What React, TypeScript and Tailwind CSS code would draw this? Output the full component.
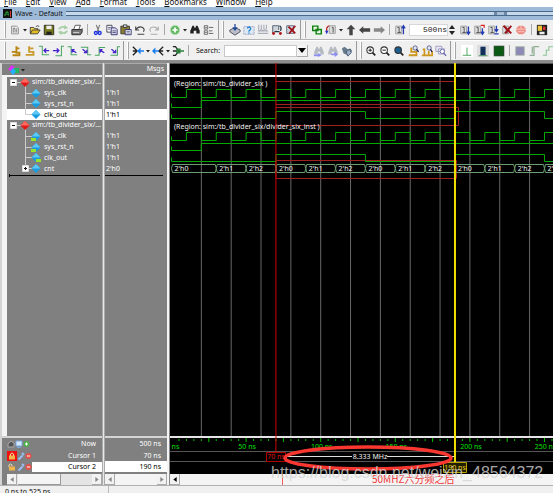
import React from 'react';

const NS = 1.492;
const END = 525;
const tx = (t: number) => 1.5 + t * NS;

const MENU = ['File', 'Edit', 'View', 'Add', 'Format', 'Tools', 'Bookmarks', 'Window', 'Help'];

/* ---------- icons ---------- */

const doc = (
    <>
        <path d="M3 2.5h6l2 2v7H3z" fill="#eee" stroke="#888" />
        <path d="M5 5v5M7 5v5M5 5h2M9 5v5" stroke="#777" />
    </>
);

const run = (extra: React.ReactNode) => (
    <>
        <path d="M2 2.5h7v9H2z" fill="#ddd" stroke="#999" />
        <path d="M4 4h2v6M4 10h4" stroke="#444" fill="none" />
        {extra}
    </>
);

const edge = (d: string, arrow: string) => (
    <>
        <path d={d} stroke="#4aa564" strokeWidth="1.2" fill="none" />
        <path d={arrow} stroke="#4422cc" strokeWidth="1.5" fill="none" />
    </>
);

const lens = (fill: string, extra?: React.ReactNode) => (
    <>
        <path d="M8.5 8.5l3.5 3.5" stroke="#222" strokeWidth="2" />
        <circle cx="6" cy="6" r="3.8" fill={fill} stroke="#333" strokeWidth="1.2" />
        {extra}
    </>
);

const binoculars = (color: string) => (
    <path d="M4 2h2v2h2V2h2l2.500 6v3h-4V8H5.500v3h-4V8z" fill={color} />
);

const ICONS: Record<string, React.ReactNode> = {
    New: doc,
    Open: <><path d="M1.500 11V4h4l1 1.500h4V7" fill="#f2d44a" stroke="#333" /><path d="M1.500 11.500L4 7h9l-3 4.500z" fill="#e5bc22" stroke="#333" /><path d="M8 3q2-2 4 0" stroke="#333" fill="none" /></>,
    Save: <><path d="M1.500 1.500h11v11h-11z" fill="#77781a" stroke="#222" /><path d="M4 2h6v4H4z" fill="#eee" /><path d="M4 9h6v3.500H4z" fill="#222" /></>,
    Reload: <><path d="M2 6q3-4 8-2M12 8q-3 4-8 2" stroke="#a8cfa8" strokeWidth="2.200" fill="none" /><path d="M9 1l4 4-5 1zM5 13L1 9l5-1z" fill="#a8cfa8" /></>,
    Print: <><path d="M5 1.500h6l-2 5H3z" fill="#fff" stroke="#444" /><path d="M1 6.500h11l1-1v4l-2 3H1z" fill="#777" stroke="#222" /><path d="M2.500 10h7" stroke="#ddd" /></>,
    Cut: <><path d="M5 1l3 8M9 1L6 9" stroke="#777" strokeWidth="1.300" /><circle cx="4.500" cy="10.500" r="1.700" fill="none" stroke="#1a35e0" strokeWidth="1.600" /><circle cx="9" cy="10.500" r="1.700" fill="none" stroke="#1a35e0" strokeWidth="1.600" /></>,
    Copy: <><path d="M1 1.500h6v8H1z" fill="#fff" stroke="#334" /><path d="M6 4.500h5l2 2v6H6z" fill="#dde" stroke="#226" /><path d="M2.500 4h3M2.500 6h2M7.500 8h4M7.500 10h4" stroke="#447" /></>,
    Paste: <><path d="M1 2.500h10v9H1z" fill="#8a7c32" stroke="#333" /><path d="M4 1h4v3H4z" fill="#ddd" stroke="#333" /><path d="M6 6.500h7v6H6z" fill="#fff" stroke="#226" /><path d="M7.500 8.500h4M7.500 10.500h4" stroke="#447" /></>,
    Undo: <path d="M2 3v4h4M2 7q3-5 8-3 3 2 1 5M4 12h8" stroke="#444" strokeWidth="1.300" fill="none" />,
    Redo: <path d="M12 3v4H8M12 7q-3-5-8-3-3 2-1 5M3 12h8" stroke="#aaa" strokeWidth="1.200" fill="none" />,
    'Add wave': <><circle cx="7" cy="7" r="5.500" fill="#62b862" stroke="#bde0bd" /><path d="M7 4v6M4 7h6" stroke="#fff" strokeWidth="2" /></>,
    Find: binoculars('#222'),
    Collapse: <><path d="M1.500 2h4v4h-4zM1.500 8h4v4h-4z" fill="#fff" stroke="#555" /><path d="M2.500 4h2M2.500 10h2M7 4h5M7 8h4M7 11h5" stroke="#555" /></>,
    Compile: <><path d="M1 7l6-3 6 3v2l-6 4-6-4z" fill="#b9bec8" stroke="#445" /><path d="M7 0v6M4.500 4L7 7l2.500-3" stroke="#224a9c" strokeWidth="1.500" fill="none" /></>,
    'Compile out of date': <><path d="M1 3h12v9H1z" fill="#dbe9f5" stroke="#99b" strokeDasharray="2 1" /><path d="M5 5q2-3 4 0 0 2-2 3v1M7 10v1.500" stroke="#1d7fd0" strokeWidth="1.500" fill="none" /></>,
    'Compile all': <><path d="M2 1v5M5 1v5M8 1v5M11 1v5M1 8h12M1 11h12" stroke="#aaaebb" strokeWidth="1.300" /><path d="M1 6l2 2 2-2 2 2 2-2 2 2" stroke="#99a" fill="none" /></>,
    Simulate: <><path d="M2 11V2h7v5" fill="#d0d4dc" stroke="#456" /><path d="M10 2q3 2 1 6M4 9h6" stroke="#234" strokeWidth="1.500" fill="none" /><circle cx="3" cy="11" r="1.700" fill="#b01820" /><circle cx="11" cy="11" r="1.700" fill="#b01820" /></>,
    'End simulation': <><path d="M2 2h8v9H2z" fill="#cdd5dd" stroke="#567" /><path d="M4 3l8 8M12 2L5 11" stroke="#a01018" strokeWidth="2" /></>,
    Environment: <><path d="M0 0h14v14H0z" fill="#e8f5e8" /><path d="M2 2.500h6v5H2zM6 6.500h6v5H6z" fill="none" stroke="#148014" strokeWidth="1.700" /></>,
    Restart: <><path d="M5 2h7v9H5z" fill="#ddd" stroke="#999" /><path d="M8 4h1.500v6M4 3Q1 4 2 9" stroke="#444" fill="none" /><path d="M5 2Q1 3 2 8" stroke="#c22" fill="none" strokeWidth="1.300" /><path d="M0 8h4l-2 4z" fill="#23c" /></>,
    Up: <path d="M7 1l5 5H9v7H5V6H2z" fill="#444" />,
    Back: <path d="M0 7l5-4.500V5h8v4H5v2.500z" fill="#444" />,
    Forward: <path d="M14 7L9 2.500V5H1v4h8v2.500z" fill="#888" />,
    'Run length': run(<path d="M11 12V3M9 5l2-3 2 3" stroke="#233ab0" strokeWidth="1.500" fill="none" />),
    Run: run(<path d="M11 3v9M9 9l2 3 2-3" stroke="#233ab0" strokeWidth="1.500" fill="none" />),
    'Continue run': run(<><path d="M11 5v7M9 9l2 3 2-3" stroke="#233ab0" strokeWidth="1.500" fill="none" /><path d="M9 1.500h4v3" stroke="#d22" strokeWidth="1.500" fill="none" /></>),
    'Run all': run(<path d="M11 2v7M9 6l2 3 2-3M8.500 11.500h5" stroke="#233ab0" strokeWidth="1.500" fill="none" />),
    Break: run(<path d="M3 2l9 9M12 2L5 11" stroke="#a01018" strokeWidth="2.200" />),
    Stop: <><path d="M4.500 2h5l3 3v4l-3 3h-5l-3-3V5z" fill="#ec8a80" /><path d="M1 6h12M3 9h8M7 2v4" stroke="#fbd0ca" /></>,
    Profile: <><path d="M1 1h12v12H1z" fill="#222" /><path d="M2 2h5v6H2z" fill="#eac23a" /><path d="M8 3h3v4H8z" fill="#d33" /><path d="M4 9h6v3H4z" fill="#eee" /></>,
    'Insert cursor': <path d="M3 12h8V9H7.500V1.500M7 4h4M2 8h5" stroke="#b98512" strokeWidth="2.200" fill="none" />,
    'Delete cursor': <path d="M2 11.500h9V8H6V1.500M6 4h5" stroke="#c79b2c" strokeWidth="2.200" fill="none" />,
    'Previous transition': edge('M1 1.500h4v10h8', 'M13 6.500H7M9.500 4L7 6.500 9.500 9'),
    'Next transition': edge('M4 12.500h7v-11h3', 'M1 6.500h7M5.500 4L8 6.500 5.500 9'),
    'Previous falling': edge('M2 2h4v9.500h7', 'M12 9L7 6M10 5.500H7V9'),
    'Next falling': edge('M1 2.500h8v9h4', 'M3 5l5 4M8 5.500V9H4.500'),
    'Previous rising': edge('M1 12h5V3h7', 'M12 9L7 6M10 5.500H7V9'),
    'Next rising': edge('M3 12h8V2h3', 'M4 5l5 4M9 5.500V9H5.500'),
    'Show drivers': <><path d="M1 2l5 5-5 5M1 7h5" stroke="#222" strokeWidth="1.500" fill="none" /><path d="M6 7l4-4v3h4v2h-4v3z" fill="#1b7ef0" /></>,
    'Show readers': <><path d="M13 2L8 7l5 5M13 7H8" stroke="#222" strokeWidth="1.500" fill="none" /><path d="M0 7l4-4v3h4v2H4v3z" fill="#1b7ef0" /></>,
    Expand: <><path d="M1 2h3l4 5-4 5H1M1 7h6" stroke="#222" strokeWidth="1.500" fill="none" /><path d="M5 4h5v2h4v2h-4v2H5z" fill="#2c7f3c" /></>,
    'Search up': <>{binoculars('#b5b9c2')}<path d="M10 12l-4-3v2H1v2h5v1z" fill="#8a8cf0" /></>,
    'Search down': <>{binoculars('#b5b9c2')}<path d="M13 11L9 8v2H5v2h4v2z" fill="#8a8cf0" /></>,
    'Search options': <><path d="M1 4l3-2 4 3 3-1 2 3-5 5-5-2z" fill="#667a8c" /><path d="M6 8l4-3 2 4-4 4z" fill="#9fb4cc" stroke="#456" /></>,
    'Zoom in': lens('#fff', <path d="M4 6h4M6 4v4" stroke="#222" strokeWidth="1.200" />),
    'Zoom out': lens('#fff', <path d="M4 6h4" stroke="#222" strokeWidth="1.200" />),
    'Zoom full': lens('#1d5d8c'),
    'Zoom cursor': <><path d="M2 12h9V8H5V3" stroke="#cc961c" strokeWidth="2.200" fill="none" /><circle cx="9.500" cy="3.500" r="2.500" fill="#dfe8fa" stroke="#557" /><path d="M11 5l2.500 3" stroke="#225" strokeWidth="1.500" /></>,
    'Zoom cursors': <><path d="M1 12h12V7M4 12V5H2M9 12V7" stroke="#cc961c" strokeWidth="2" fill="none" /><circle cx="9.500" cy="3.500" r="2.500" fill="#dfe8fa" stroke="#557" /><path d="M11 5l2 3" stroke="#225" strokeWidth="1.500" /></>,
    'Zoom range': <><path d="M1 1.500h7v6H1zM4 4.500h7v6H4z" fill="#e8e8f6" stroke="#99b" /><circle cx="8.500" cy="7.500" r="2.500" fill="#fff" stroke="#66a" /><path d="M10 9.500l3 3" stroke="#66a" strokeWidth="1.500" /></>,
    'Leaf view': <><path d="M0 0h14v14H0z" fill="#fff" /><path d="M7 3v9M2 12h10" stroke="#3a9c4c" fill="none" /></>,
    'Bar view': <><path d="M0 0h14v14H0z" fill="#ddd" /><path d="M4 2h6v10H4z" fill="#12305c" /><path d="M2 12.500h10" stroke="#3a8c4c" /></>,
    'Block view': <><path d="M0 0h14v14H0z" fill="#ddd" /><path d="M1.500 1.500h11v11h-11z" fill="#0b5a14" stroke="#0a3c10" /></>,
    'Event mode': <path d="M2 2h10v10H2z" fill="#8e88b4" stroke="#a9b8a9" />,
    'Edge mode': <path d="M2 12h5V2h6M5 2v8" stroke="#8fae95" strokeWidth="1.500" fill="none" />,
    'Pulse mode': <path d="M1 12h4V6h3V2h6" stroke="#86c490" strokeWidth="1.200" fill="none" />,
};

const Tool: React.FC<{ name: string }> = ({ name }) => (
    <button type="button" aria-label={name} className="flex h-[14px] w-[14px] shrink-0 items-center justify-center">
        <svg viewBox="0 0 14 14" className="size-3">{ICONS[name]}</svg>
    </button>
);

const Tools: React.FC<{ names: string[] }> = ({ names }) => (
    <>{names.map((name) => <Tool key={name} name={name} />)}</>
);

const Caret = () => (
    <svg viewBox="0 0 6 4" className="h-1 w-[6px] shrink-0"><path d="M1 1h4L3 3.500z" fill="#222" /></svg>
);
const Sep = () => <span className="mx-[3px] h-[11px] w-px shrink-0 bg-[#a8a8a8]" />;
const Grip = () => <span className="h-[17px] w-[2px] shrink-0 border-l border-white bg-[#a6a6a6]" />;
const Split = () => (
    <span className="flex h-full shrink-0 items-center gap-[3px] px-[2px]">
        <span className="h-full w-px bg-[#9a9a9a]" />
        <Grip />
    </span>
);

/* ---------- toolbars ---------- */

const Toolbars = () => (
    <div className="border-b-3 border-[#8c8c8c] bg-[#f0f0f0]">
        <div className="flex h-5 items-center overflow-hidden border-b border-[#b4b4b4] pl-1">
            <Grip />
            <span className="w-[2px] shrink-0" />
            <Tools names={['New']} /><Caret />
            <Tools names={['Open', 'Save', 'Reload', 'Print']} /><Sep />
            <Tools names={['Cut', 'Copy', 'Paste', 'Undo', 'Redo']} /><Sep />
            <Tools names={['Add wave']} /><Caret />
            <Tools names={['Find', 'Collapse']} />
            <Split />
            <span className="w-[2px] shrink-0" />
            <Tools names={['Compile', 'Compile out of date', 'Compile all', 'Simulate', 'End simulation']} />
            <Split />
            <span className="w-[2px] shrink-0" />
            <Tools names={['Environment', 'Restart']} /><Caret />
            <Tools names={['Up', 'Back', 'Forward']} /><Sep />
            <Tools names={['Run length']} />
            <input
                aria-label="Run length value"
                defaultValue="500ns"
                className="ml-[2px] h-3 w-[39px] shrink-0 border border-[#d8d8d8] bg-white text-right font-['Liberation_Mono',monospace] text-[8px] text-[#222] outline-none"
            />
            <svg viewBox="0 0 8 12" className="mr-[2px] h-3 w-2 shrink-0"><path d="M1 5h6L4 1zM1 7h6l-3 4z" fill="#222" /></svg>
            <Tools names={['Run', 'Continue run', 'Run all', 'Break', 'Stop']} /><Sep />
            <Tools names={['Profile']} />
        </div>
        <div className="flex h-5 items-center overflow-hidden border-t border-white pl-1">
            <Grip />
            <span className="w-[3px] shrink-0" />
            <Tools names={['Insert cursor', 'Delete cursor', 'Previous transition', 'Next transition', 'Previous falling', 'Next falling', 'Previous rising', 'Next rising']} />
            <Split />
            <Tools names={['Show drivers']} /><Caret />
            <Tools names={['Show readers']} /><Caret />
            <Tools names={['Expand']} />
            <Sep />
            <label htmlFor="search" className="ml-1 w-7 shrink-0">Search:</label>
            <input id="search" className="h-3 w-[73px] shrink-0 border border-[#c8c8c8] bg-white px-px outline-none" />
            <button type="button" aria-label="Search history" className="mr-1 flex h-3 w-[11px] shrink-0 items-center justify-center border-r border-b border-[#aaa] bg-[#f4f4f4]">
                <svg viewBox="0 0 8 5" className="h-[5px] w-2"><path d="M0 0h8L4 5z" fill="#000" /></svg>
            </button>
            <Tools names={['Search up', 'Search down', 'Search options']} />
            <Split />
            <Tools names={['Zoom in', 'Zoom out', 'Zoom full', 'Zoom cursor', 'Zoom cursors', 'Zoom range']} />
            <Split />
            <span className="flex shrink-0 gap-[2px] pl-[2px]">
                <Tools names={['Leaf view', 'Bar view', 'Block view']} />
            </span>
            <Sep />
            <Tools names={['Event mode', 'Edge mode', 'Pulse mode']} />
        </div>
    </div>
);

/* ---------- signal tree ---------- */

type Signal = { name: string; value?: string; kind: 'region' | 'signal' | 'in' | 'out' | 'bus'; active?: boolean };

const SIGNALS: Signal[] = [
    { name: 'sim:/tb_divider_six/...', kind: 'region' },
    { name: 'sys_clk', value: "1'h1", kind: 'signal' },
    { name: 'sys_rst_n', value: "1'h1", kind: 'signal' },
    { name: 'clk_out', value: "1'h1", kind: 'signal', active: true },
    { name: 'sim:/tb_divider_six/...', kind: 'region' },
    { name: 'sys_clk', value: "1'h1", kind: 'in' },
    { name: 'sys_rst_n', value: "1'h1", kind: 'in' },
    { name: 'clk_out', value: "1'h1", kind: 'out' },
    { name: 'cnt', value: "2'h0", kind: 'bus' },
];

const Node: React.FC<{ signal: Signal; last: boolean }> = ({ signal, last }) => {
    const region = signal.kind === 'region';
    const x = region ? 18 : 29;
    return (
        <svg viewBox="0 0 36 11" className="h-[11px] shrink-0" style={{ width: region ? 24 : 36 }} preserveAspectRatio="xMinYMid slice">
            {region
                ? <path d="M10 5.500h4M18.500 8v3" stroke="#ccc" fill="none" />
                : <path d={last ? 'M18.500 0v5.500H25' : 'M18.500 0v11M18.500 5.500H25'} stroke="#ccc" fill="none" />}
            {(region || signal.kind === 'bus') && (
                <g transform={region ? 'translate(3 2)' : 'translate(15 2)'}>
                    <path d="M.5.5h6v6h-6z" fill="#fff" stroke="#ddd" />
                    <path d={region ? 'M2 3.500h3' : 'M2 3.500h3M3.500 2v3'} stroke="#111" />
                </g>
            )}
            <path d={`M${x} 1l4.500 4.500-4.500 4.500-4.500-4.500z`} fill={region ? '#e01818' : '#1a9be0'} />
            <path d={`M${x} 1l4.500 4.500h-9z`} fill={region ? '#ff6a60' : '#5cc8f4'} />
            {signal.kind === 'in' && <path d="M24 7h5v3h-5z" fill="#9be22c" />}
            {signal.kind === 'out' && <path d="M29 7h5v3h-5z" fill="#9be22c" />}
        </svg>
    );
};

/* ---------- waveforms ---------- */

type Step = [number, number];

const trace = (steps: Step[], low: number, high: number) => {
    const y = (v: number) => (v ? high : low);
    let d = `M1.500 ${low - 4}V${y(steps[0][1])}`;
    steps.slice(1).forEach(([t, v]) => {
        d += `H${tx(t)}V${y(v)}`;
    });
    return d + `H${tx(END)}`;
};

const CLOCK: Step[] = [[0, 0], ...Array.from({ length: 52 }, (_, i): Step => [10 + i * 10, i % 2 ? 0 : 1])];
const RESET: Step[] = [[0, 0], [20, 1]];
const OUT: Step[] = [[0, 0], ...Array.from({ length: 8 }, (_, i): Step => [70 + i * 60, i % 2 ? 0 : 1])];
const COUNTS = [0, ...Array.from({ length: 25 }, (_, i) => 30 + i * 20)];
const GRID = Array.from({ length: 26 }, (_, i) => 20 + i * 20);

const Waves = () => (
    <svg width={tx(END)} height="110" className="absolute top-0 left-0" fill="none">
        <g stroke="#a02020">
            <path d={`M${tx(70)} 4.500H${tx(190)}M${tx(70)} 27.500H${tx(190)}M${tx(70)} 30.500H288.500V48.500H${tx(70)}`} />
            <path d={`M${tx(70)} 83.500H286.500V101.500H${tx(70)}z`} />
        </g>
        <g stroke="#00a800">
            <path d={trace(CLOCK, 20.5, 12.5)} />
            <path d={trace(RESET, 30.5, 23.5)} />
            <path d={trace(OUT, 41.5, 34.5)} />
            <path d={trace(CLOCK, 63.5, 55.5)} />
            <path d={trace(RESET, 73.5, 66.5)} />
            <path d={trace(OUT, 84.5, 77.5)} />
        </g>
        <path
            stroke="#6c9c70"
            d={COUNTS.map((t, i) => {
                const a = tx(t);
                const b = tx(COUNTS[i + 1] ?? END);
                return `M${a} 91.500L${a + 1} 87.500H${b - 1}L${b} 91.500L${b - 1} 95.500H${a + 1}z`;
            }).join('')}
        />
        <g fill="#f0f0f0">
            <text x="4" y="9">(Region: sim:/tb_divider_six )</text>
            <text x="4" y="52">(Region: sim:/tb_divider_six/divider_six_inst )</text>
            {COUNTS.map((t, i) => <text key={t} x={tx(t) + 3} y="94">{`2'h${i % 3}`}</text>)}
        </g>
    </svg>
);

const Ruler = () => (
    <svg width={tx(END)} height="36" className="absolute top-0 left-0" fill="none">
        {Array.from({ length: 104 }, (_, i) => (i + 1) * 5).map((t) => (
            <path key={t} d={`M${tx(t)} ${t % 25 ? 1 : 0}V${t % 25 ? 3 : 4}`} stroke="#00c000" />
        ))}
        <g fill="#00e000" textAnchor="middle">
            {Array.from({ length: 11 }, (_, i) => i * 50).map((t) => (
                <text key={t} x={tx(t) + 1} y="11">{t} ns</text>
            ))}
        </g>
        <path d={`M0 13.500H${tx(END)}M0 23.500H${tx(END)}`} stroke="#555" />
        <path d={`M115 18.500H182M217 18.500H${tx(190)}`} stroke="#ddd" />
        <text x="200" y="21" fill="#f4f4f4" textAnchor="middle">8.333 MHz</text>
        <path d="M96.500 14.500h19v9h-19z" fill="#000" stroke="#b00000" />
        <text x="106" y="21" fill="#e01010" textAnchor="middle">70 ns</text>
        <path d="M273.500 24.500h23v10h-23z" fill="#221e00" stroke="#b8a400" />
        <text x="285" y="32" fill="#e8d020" textAnchor="middle">190 ns</text>
    </svg>
);

const Arrow: React.FC<{ dir: 'left' | 'right'; dark?: boolean }> = ({ dir, dark }) => (
    <button type="button" aria-label={`Scroll ${dir}`} className="flex h-[11px] w-[10px] shrink-0 items-center justify-center border-r border-b border-[#aaa] bg-[#f2f2f2]">
        <svg viewBox="0 0 4 6" className="h-[5px] w-1">
            <path d={dir === 'left' ? 'M4 0v6L0 3z' : 'M0 0v6l4-3z'} fill={dark ? '#000' : '#888'} />
        </svg>
    </button>
);

const CursorIcons: React.FC<{ locked?: boolean }> = ({ locked }) => (
    <svg viewBox="0 0 25 10" className="h-[10px] w-[25px] shrink-0">
        {locked && <path d="M0 0h10v10H0z" fill="#f01010" />}
        <path d={locked ? 'M3.500 5V3q1.500-2 3 0v2' : 'M2 5V3q1.500-2 3 0v1'} stroke="#f0e0b0" fill="none" />
        <path d="M2 4.500h6v4H2z" fill="#efb54a" />
        <path d="M11.500 8.500l4-4M15 2l2 2" stroke="#9cc0f4" strokeWidth="1.800" />
        <circle cx="21.500" cy="5" r="3" fill="#e25048" />
        <path d="M20 5h3" stroke="#fff" />
    </svg>
);

const NowIcons = () => (
    <svg viewBox="0 0 25 10" className="h-[10px] w-[25px] shrink-0">
        <path d="M1 8V5l3-3 3 2v4z" fill="#555" stroke="#aaa" />
        <path d="M9 2h6v5H9zM10 8.500h4" fill="#d4e8ff" stroke="#7aa8dc" />
        <circle cx="19.500" cy="5" r="3" fill="#4cb04c" />
        <path d="M18 5h3M19.500 3.500v3" stroke="#fff" />
    </svg>
);

/* ---------- window ---------- */

const App: React.FC = () => {
    return (
        <div className="flex h-screen flex-col overflow-hidden bg-[#f0f0f0] font-['Noto_Sans',sans-serif] text-[7px] leading-[10px] text-[#111]">
            <nav className="flex h-[7px] shrink-0 items-end gap-[9px] bg-white pl-1 text-[8px] leading-[10px]">
                {MENU.map((item) => (
                    <button key={item} type="button" className="first-letter:underline">{item}</button>
                ))}
            </nav>

            <header className="flex h-[13px] shrink-0 items-center gap-[3px] bg-[#9dbbd8] pl-[3px]">
                <svg viewBox="0 0 9 9" className="size-[9px] shrink-0">
                    <path d="M0 0h9v9H0z" fill="#111" />
                    <path d="M1 6h2V3h2v3h1" stroke="#2fae3c" fill="none" />
                    <path d="M7.500 2v6" stroke="#d33" />
                </svg>
                <h1 className="shrink-0">Wave - Default</h1>
                <div className="flex h-[5px] flex-1 justify-end border-y border-[#46688a] bg-[#c6d8e9] pr-[46px]">
                    <span className="w-[13px] border-x-3 border-dotted border-[#6c88a6] bg-[#a9c0d8]" />
                </div>
            </header>

            <Toolbars />

            <main className="flex min-h-0 flex-1 border-l-2 border-[#d4d4d4]">
                <section className="flex w-[100px] shrink-0 flex-col bg-[#808080] text-white">
                    <div className="flex h-3 shrink-0 items-center border-t border-[#aaa] pl-[6px]">
                        <svg viewBox="0 0 12 10" className="h-[10px] w-3">
                            <path d="M4 0l4 4-4 4-4-4z" fill="#e02cf0" />
                            <path d="M6 3h5v5H6z" fill="#20b860" />
                            <path d="M5 3l3 3.500L5 10 2 6.500z" fill="#22b0ff" />
                        </svg>
                        <Caret />
                    </div>
                    <div className="flex-1 border-t-2 border-l-[5px] border-[#f4f4f4]">
                        <ul className="grid h-[97px] grid-rows-9">
                            {SIGNALS.map((s, i) => (
                                <li key={i} className={`flex items-center gap-px overflow-hidden whitespace-nowrap ${s.active ? 'bg-white text-black' : ''}`}>
                                    <Node signal={s} last={!!s.active || s.kind === 'bus'} />
                                    {s.name}
                                </li>
                            ))}
                        </ul>
                        <div className="mx-[2px] h-[3px] border-l border-black"><div className="h-[2px] border-b border-black" /></div>
                    </div>
                    <div className="h-[36px] border-t-2 border-[#d4d4d4] pl-[5px]">
                        <div className="flex h-3 items-center"><NowIcons /><span className="flex-1 pr-[6px] text-right">Now</span></div>
                        <div className="flex h-[11px] items-center"><CursorIcons locked /><span className="flex-1 pr-[6px] text-right">Cursor 1</span></div>
                        <div className="flex h-[11px] items-center"><CursorIcons /><span className="flex-1 bg-white pr-[6px] text-right text-black">Cursor 2</span></div>
                    </div>
                    <div className="mt-[2px] flex h-[11px] bg-[#e4e4e4]">
                        <span className="w-[5px] bg-[#808080]" />
                        <Arrow dir="left" />
                        <span className="ml-px w-[43px] border-r border-b border-[#999] bg-[#f4f4f4]" />
                        <span className="flex-1" />
                        <Arrow dir="right" />
                    </div>
                </section>
                <div className="w-[3px] shrink-0 border-x border-[#aaa] bg-[#e8e8e8]" />

                <section className="flex w-[62px] shrink-0 flex-col bg-[#808080] text-white">
                    <div className="h-3 shrink-0 border-t border-[#aaa] pr-[3px] text-right">Msgs</div>
                    <div className="flex-1 border-t-2 border-[#f4f4f4]">
                        <ul className="grid h-[97px] grid-rows-9">
                            {SIGNALS.map((s, i) => (
                                <li key={i} className={`flex items-center pl-px ${s.active ? 'bg-white text-black' : ''}`}>{s.value}</li>
                            ))}
                        </ul>
                        <div className="mr-1 h-[2px] border-b border-black" />
                    </div>
                    <div className="h-[36px] border-t-2 border-[#d4d4d4] text-right">
                        <div className="flex h-3 items-center justify-end pr-[6px]">500 ns</div>
                        <div className="flex h-[11px] items-center justify-end pr-[6px]">70 ns</div>
                        <div className="flex h-[11px] items-center justify-end bg-white pr-[6px] text-black">190 ns</div>
                    </div>
                    <div className="mt-[2px] flex h-[11px] justify-between bg-[#f4f4f4]">
                        <Arrow dir="left" />
                        <Arrow dir="right" />
                    </div>
                </section>
                <div className="w-[3px] shrink-0 border-r border-[#888] bg-[#f4f4f4]" />

                <section className="relative flex min-w-0 flex-1 flex-col overflow-hidden bg-black">
                    <div className="h-3 shrink-0 border-t border-[#555]" />
                    <div className="relative flex-1 overflow-hidden border-t-2 border-[#f4f4f4]">
                        <svg width={tx(END)} height="100%" className="absolute top-0 left-0">
                            {GRID.map((t) => <line key={t} x1={tx(t)} x2={tx(t)} y1="0" y2="100%" stroke="#686868" />)}
                        </svg>
                        <Waves />
                    </div>
                    <div className="relative h-[38px] shrink-0 overflow-hidden border-t-2 border-[#e4e4e4]">
                        <Ruler />
                    </div>
                    <div className="flex h-[11px] shrink-0 bg-[#f4f4f4]">
                        <Arrow dir="left" dark />
                        <span className="ml-[102px] w-px bg-[#f06060]" />
                    </div>
                    <svg width={tx(END)} className="absolute top-0 left-0 h-[calc(100%-33px)]">
                        <line x1={tx(70)} x2={tx(70)} y1="0" y2="100%" stroke="#d00000" />
                    </svg>
                    <svg width={tx(END)} className="absolute top-0 left-0 h-[calc(100%-23px)]">
                        <line x1={tx(190)} x2={tx(190)} y1="0" y2="100%" stroke="#f4e000" strokeWidth="2" />
                    </svg>
                    <svg width="383" height="42" className="absolute bottom-0 left-0" fill="none">
                        <ellipse cx="198" cy="15" rx="83" ry="11" stroke="#f83830" strokeWidth="3.500" />
                        <text x="202" y="40" fill="#f03838" className="font-['Noto_Sans_CJK_SC',sans-serif] text-[10px]">50MHZ六分频之后</text>
                        <text x="101" y="35" fill="#d4d4d4" fillOpacity="0.8" className="font-['Liberation_Sans',sans-serif] text-[16px]">https://blog.csdn.net/weixin_48564372</text>
                    </svg>
                </section>
            </main>

            <footer className="flex h-2 shrink-0 overflow-hidden border-t border-[#b0b0b0]">
                <span className="w-[109px] border-r border-[#bbb] pt-px pl-[5px]">0 ns to 525 ns</span>
            </footer>
        </div>
    );
};

export default App;
